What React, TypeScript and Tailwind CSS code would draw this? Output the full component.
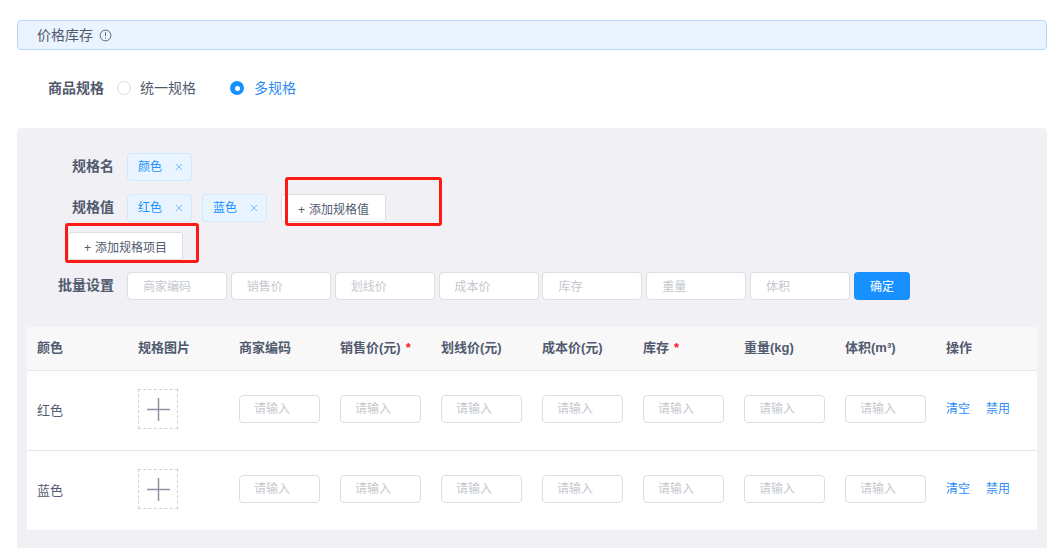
const batchFields = ["商家编码", "销售价", "划线价", "成本价", "库存", "重量", "体积"];
const columns = [
  { title: "颜色" },
  { title: "规格图片" },
  { title: "商家编码" },
  { title: "销售价(元)", required: true },
  { title: "划线价(元)" },
  { title: "成本价(元)" },
  { title: "库存", required: true },
  { title: "重量(kg)" },
  { title: "体积(m³)" },
  { title: "操作" },
];
const priceRows = ["红色", "蓝色"];

function Tag({ text }: { text: string }) {
  return (
    <span className="flex h-7 w-[65px] items-center rounded border border-[#d1e9ff] bg-[#e8f4ff] pl-[10px] text-xs text-[#1890ff]">
      {text}
      <svg viewBox="0 0 8 8" className="ml-[13px] size-2 text-[#7cb9f5]" fill="none" stroke="currentColor" strokeWidth="1">
        <path d="M1 1l6 6M7 1L1 7" />
      </svg>
    </span>
  );
}

function AddButton({ text, inline }: { text: string; inline?: boolean }) {
  return (
    <button
      className={
        inline
          ? "flex h-7 items-center gap-1 rounded-[3px] border border-[#dcdee2] bg-white px-4 pt-[3px] text-xs text-[#515a6e]"
          : "flex h-7 items-center gap-1 rounded-[3px] border border-[#dcdee2] bg-white px-[15px] pt-[3px] text-xs text-[#515a6e]"
      }
    >
      <span>+</span>
      {text}
    </button>
  );
}

function TextInput({ placeholder, wide }: { placeholder: string; wide?: boolean }) {
  return (
    <div
      className={
        wide
          ? "flex h-7 w-[100px] items-center rounded border border-[#dcdee2] bg-white pt-px pl-[15px] text-xs text-[#c5c8ce]"
          : "flex h-7 w-[81px] items-center rounded border border-[#dcdee2] bg-white pl-[14px] text-xs text-[#c5c8ce]"
      }
    >
      {placeholder}
    </div>
  );
}

function FormLabel({ text }: { text: string }) {
  return <div className="w-[100px] shrink-0 pr-[13px] pb-0.5 text-right text-sm font-bold text-[#515a6e]">{text}</div>;
}

export default function App() {
  return (
    <div className="h-[548px] w-[1058px] overflow-hidden bg-white px-[11px] pt-5 pl-[17px] font-['Liberation_Sans','Noto_Sans_CJK_SC',sans-serif] text-[#515a6e]">
      {/* Section title */}
      <div className="flex h-[30px] items-center rounded border border-[#b5d7fb] bg-[#eaf3fe] pl-[19px] text-sm">
        价格库存
        <svg viewBox="0 0 14 14" className="ml-1.5 size-[13px]" fill="none" stroke="currentColor">
          <circle cx="7" cy="7" r="5.8" />
          <path d="M7 3.6v4.2M7 9.4v1" />
        </svg>
      </div>

      {/* Spec type */}
      <div className="mt-[27px] flex h-[22px] items-center pl-[31px] text-sm">
        <span className="font-bold">商品规格</span>
        <span className="ml-[13px] size-[14px] rounded-full border border-[#dcdee2] bg-white" />
        <span className="ml-[9px]">统一规格</span>
        <span className="ml-[34px] flex size-[14px] items-center justify-center rounded-full bg-[#1890ff]">
          <span className="size-[5px] rounded-full bg-white" />
        </span>
        <span className="ml-[10px] text-[#2d8cf0]">多规格</span>
      </div>

      {/* Spec panel */}
      <div className="relative mt-[29px] h-[430px] rounded-t bg-[#f0f0f5] px-[10px] pt-[25px]">
        <div className="flex items-center">
          <FormLabel text="规格名" />
          <Tag text="颜色" />
        </div>

        <div className="mt-[13px] flex items-center">
          <FormLabel text="规格值" />
          <Tag text="红色" />
          <div className="ml-[10px]">
            <Tag text="蓝色" />
          </div>
          <div className="ml-[14px]">
            <AddButton text="添加规格值" inline />
          </div>
        </div>

        <div className="mt-[10px] pl-[41px]">
          <AddButton text="添加规格项目" />
        </div>

        <div className="mt-3 flex items-center">
          <FormLabel text="批量设置" />
          <div className="flex gap-[3.85px]">
            {batchFields.map((field) => (
              <TextInput key={field} placeholder={field} wide />
            ))}
            <button className="h-7 w-14 rounded bg-[#1890ff] pt-px text-xs text-white">确定</button>
          </div>
        </div>

        {/* Price table */}
        <div className="mt-[27px] w-[1010px] bg-white text-[13px]">
          <div className="grid h-11 grid-cols-[repeat(10,101px)] items-center border-b border-[#e4e8ee] bg-[#f8f8f9] pb-0.5 font-bold">
            {columns.map((col) => (
              <div key={col.title} className="pl-[10px]">
                {col.title}
                {col.required && <span className="ml-[5px] text-[#ed1c24]">*</span>}
              </div>
            ))}
          </div>
          {priceRows.map((row, index) => (
            <div
              key={row}
              className={
                index === 0
                  ? "grid h-20 grid-cols-[repeat(10,101px)] items-center border-b border-[#e4e8ee]"
                  : "grid h-[79px] grid-cols-[repeat(10,101px)] items-center"
              }
            >
              <div className="pl-[10px]">{row}</div>
              <div className="mb-[3px] pl-[10px]">
                <div className="flex size-10 items-center justify-center border border-dashed border-[#d0d0d0]">
                  <svg viewBox="0 0 23 23" className="size-[23px] text-[#8d93a0]" fill="none" stroke="currentColor" strokeWidth="1.5">
                    <path d="M0 11.5h23M11.5 0v23" />
                  </svg>
                </div>
              </div>
              {columns.slice(2, 9).map((col) => (
                <div key={col.title} className="mb-1 pl-[10px]">
                  <TextInput placeholder="请输入" />
                </div>
              ))}
              <div className="mb-1 flex gap-[16px] pl-[10px] text-xs text-[#2d8cf0]">
                <span>清空</span>
                <span>禁用</span>
              </div>
            </div>
          ))}
        </div>

        {/* Red annotation boxes */}
        <div className="absolute top-[49px] left-[268px] h-[49px] w-[157px] rounded-[3px] border-[3px] border-[#fb1b14]" />
        <div className="absolute top-[95px] left-[48px] h-[40px] w-[134px] rounded-[3px] border-[3px] border-[#fb1b14]" />
      </div>
    </div>
  );
}
